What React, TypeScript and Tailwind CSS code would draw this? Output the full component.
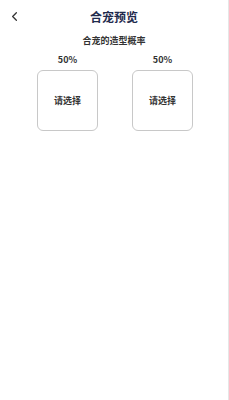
import { ChevronLeft } from "lucide-react";

function Slot() {
  return (
    <div className="flex flex-col items-center">
      <div className="text-[9px] font-bold text-[#333] leading-none">50%</div>
      <button className="mt-[6px] w-[61px] h-[61px] rounded-[6px] border border-[#c8c8c8] bg-white flex items-center justify-center text-[9px] font-semibold text-[#333]">
        请选择
      </button>
    </div>
  );
}

export default function App() {
  return (
    <div
      className="w-[229px] h-[400px] bg-white border-r border-[#e6e6e6] flex flex-col"
      style={{ fontFamily: '"Noto Sans CJK SC", "Noto Sans", sans-serif' }}
    >
      <div className="h-[34px] flex items-center relative">
        <ChevronLeft className="absolute left-[7px] top-[9px] w-[15px] h-[15px] text-[#333]" strokeWidth={2} />
        <div className="flex-1 text-center text-[12px] font-bold text-[#1f2b4d]">合宠预览</div>
      </div>
      <div className="text-center text-[9px] font-semibold text-[#333] leading-none mt-[2px]">合宠的造型概率</div>
      <div className="flex justify-center gap-[34px] mt-[10px] pl-[2px]">
        <Slot />
        <Slot />
      </div>
    </div>
  );
}
